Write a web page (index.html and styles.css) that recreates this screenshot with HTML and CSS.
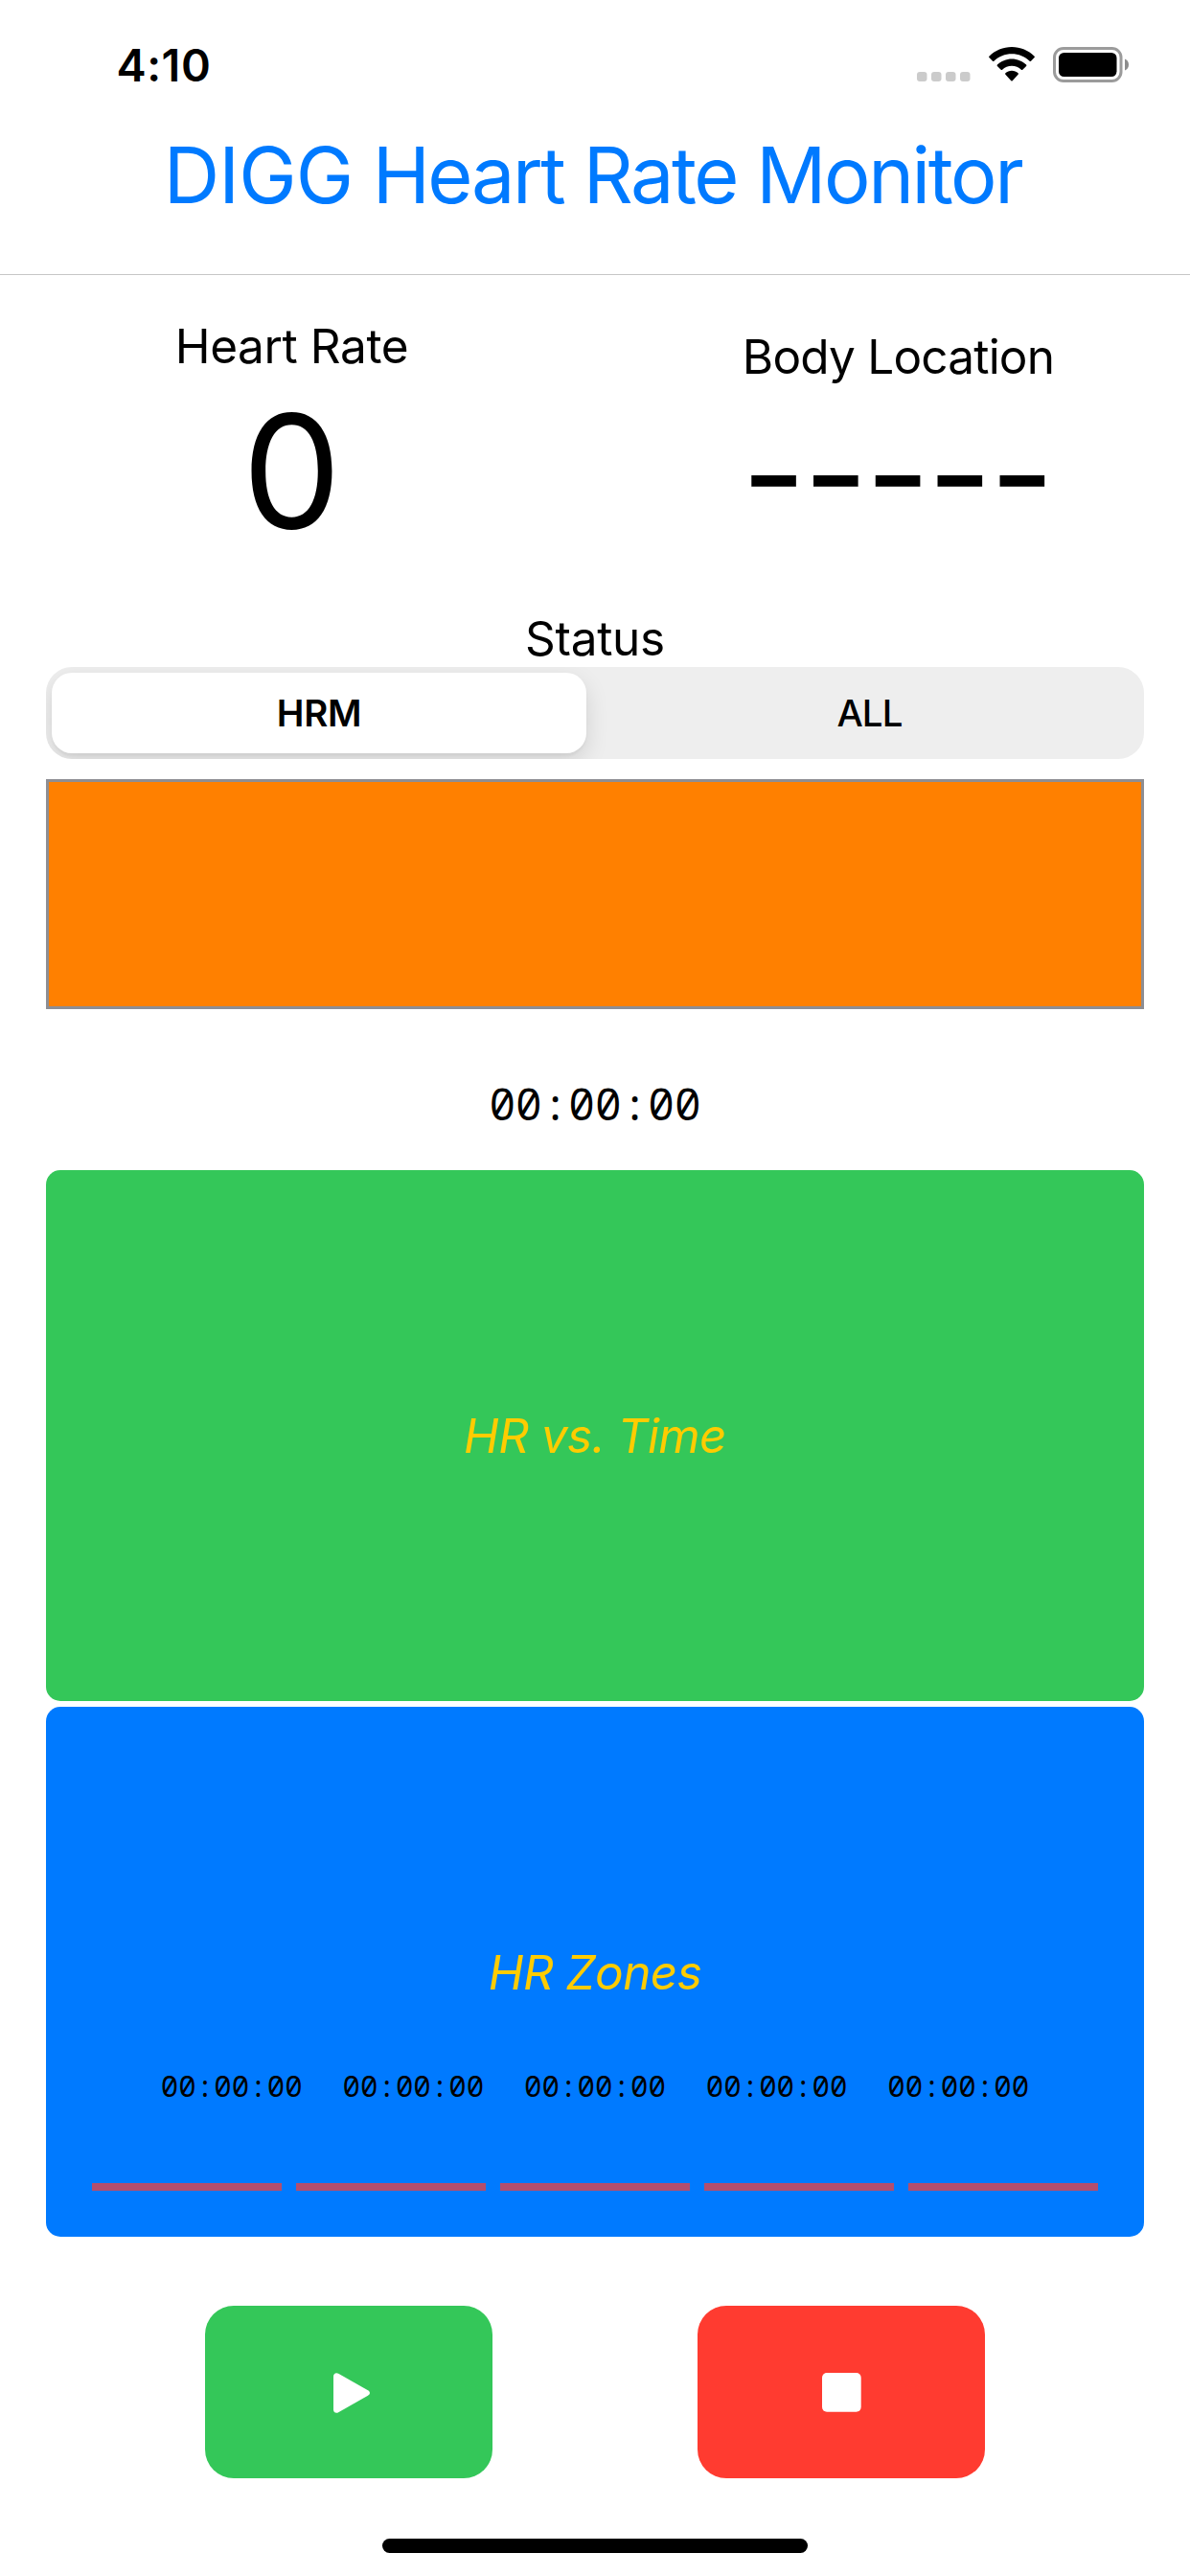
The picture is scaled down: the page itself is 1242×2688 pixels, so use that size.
FILE: index.html
```html
<!DOCTYPE html>
<html lang="en">
<head>
  <meta charset="utf-8">
  <title>DIGG Heart Rate Monitor</title>
  <link rel="stylesheet" href="styles.css">
</head>
<body>
  <header class="header">
    <div class="status-bar">
      <span class="clock">4:10</span>
      <div class="indicators">
        <svg class="signal" width="56" height="10" viewBox="0 0 56 10" fill="#cbcbcb">
          <rect x="0" width="10.5" height="10" rx="3"/>
          <rect x="15" width="10.5" height="10" rx="3"/>
          <rect x="30" width="10.5" height="10" rx="3"/>
          <rect x="45" width="10.5" height="10" rx="3"/>
        </svg>
        <svg class="wifi" width="48" height="36" viewBox="0 0 48 36">
          <path d="M24 0C15 0 6.500 3.600 .4 9.700Q-.2 10.400 .4 11.100L4 14.700Q4.700 15.300 5.400 14.700C10.300 9.900 17 7.300 24 7.300S37.700 9.900 42.600 14.700Q43.300 15.300 44 14.700L47.600 11.100Q48.200 10.400 47.600 9.700C41.500 3.600 33 0 24 0Z"/>
          <path d="M24 12.400C18.200 12.400 12.900 14.700 8.900 18.500Q8.200 19.200 8.900 19.900L12.700 23.700Q13.400 24.300 14.100 23.700C16.700 21.200 20.200 19.700 24 19.700S31.300 21.200 33.900 23.700Q34.600 24.300 35.300 23.700L39.100 19.900Q39.800 19.200 39.100 18.500C35.100 14.700 29.800 12.400 24 12.400Z"/>
          <path d="M24 24.700C21.400 24.700 19.100 25.700 17.400 27.300Q16.700 28 17.400 28.700L23.300 35.200Q24 35.900 24.700 35.200L30.600 28.700Q31.300 28 30.600 27.300C28.900 25.700 26.600 24.700 24 24.700Z"/>
        </svg>
        <svg class="battery" width="80" height="37" viewBox="0 0 80 37">
          <rect x="1.500" y="1.500" width="69.500" height="34" rx="9.500" fill="none" stroke="#9b9b9b" stroke-width="3"/>
          <rect x="6" y="6" width="60.500" height="25" rx="5.500"/>
          <path d="M75 12.500C77.500 13.500 79 15.800 79 18.500S77.500 23.500 75 24.500Z" fill="#8c8c8c"/>
        </svg>
      </div>
    </div>
    <h1 class="title"><span class="brand">DIGG</span> Heart Rate Monitor</h1>
  </header>

  <main class="content">
    <section class="metrics">
      <div class="metric">
        <div class="label label-rate">Heart Rate</div>
        <div class="rate">0</div>
      </div>
      <div class="metric metric-location">
        <div class="label label-location">Body Location</div>
        <div class="location">-----</div>
      </div>
    </section>

    <div class="label label-status">Status</div>
    <div class="segmented">
      <div class="segment segment-selected">HRM</div>
      <div class="segment">ALL</div>
    </div>
    <div class="device-list"></div>

    <div class="timer">00:00:00</div>

    <section class="card card-time">
      <h2 class="card-title">HR vs. Time</h2>
    </section>
    <section class="card card-zones">
      <h2 class="card-title">HR Zones</h2>
      <div class="zone-times">
        <span>00:00:00</span><span>00:00:00</span><span>00:00:00</span><span>00:00:00</span><span>00:00:00</span>
      </div>
      <div class="zone-bars">
        <i></i><i></i><i></i><i></i><i></i>
      </div>
    </section>
  </main>

  <div class="controls">
    <button class="control start" aria-label="Start">
      <svg width="38" height="42" viewBox="0 0 38 42"><path d="M0 3.500C0 .8 2.600-.7 5.200 .7L36 18.300Q38 19.500 38 21T36 23.700L5.200 41.300C2.600 42.700 0 41.200 0 38.500Z" fill="#fff"/></svg>
    </button>
    <button class="control stop" aria-label="Stop">
      <svg width="41" height="41" viewBox="0 0 41 41"><rect width="40.700" height="40.700" rx="5" fill="#fff"/></svg>
    </button>
  </div>
  <div class="home-indicator"></div>
</body>
</html>
```

FILE: styles.css
```css
* {
  box-sizing: border-box;
}

body {
  margin: 0;
  width: 1242px;
  height: 2688px;
  overflow: hidden;
  background: #fff;
  color: #000;
  font-family: Inter, "Liberation Sans", sans-serif;
}

h1,
h2 {
  margin: 0;
  font-weight: 400;
}

/* Header */
.header {
  height: 287px;
  border-bottom: 1px solid #c6c6c6;
}

.status-bar {
  display: flex;
  justify-content: space-between;
  height: 136px;
  padding: 0 63px 0 121.5px;
}

.clock {
  font-size: 46.8px;
  font-weight: 600;
  line-height: 136px;
  letter-spacing: 0.5px;
}

.indicators {
  display: flex;
  align-items: flex-start;
}

.signal {
  margin: 75px 19px 0 0;
}

.wifi {
  margin: 49px 19px 0 0;
}

.battery {
  margin-top: 49px;
}

.title {
  padding-right: 5px;
  color: #007aff;
  font-size: 81px;
  line-height: 95px;
  letter-spacing: -2.45px;
  text-align: center;
  white-space: nowrap;
}

.brand {
  letter-spacing: -0.9px;
}

/* Readings */
.content {
  padding: 0 48px;
}

.metrics {
  display: grid;
  grid-template-columns: 1fr 1fr;
  gap: 120px;
  height: 349px;
  padding-top: 44px;
  text-align: center;
}

.metric-location {
  padding-top: 11px;
}

.label {
  font-size: 49.5px;
  line-height: 60px;
  text-align: center;
}

.label-rate {
  letter-spacing: -0.4px;
}

.label-location {
  letter-spacing: -0.8px;
}

.label-status {
  letter-spacing: -0.3px;
}

.rate {
  font-size: 164px;
  line-height: 202px;
}

.location {
  padding-right: 3px;
  font-size: 146px;
  line-height: 184px;
  letter-spacing: -2.4px;
  font-feature-settings: "calt" 0;
}

/* Device filter */
.segmented {
  display: flex;
  gap: 9px;
  height: 96px;
  padding: 6px 0 6px 6px;
  overflow: hidden;
  border-radius: 27px;
  background: #eeeeee;
}

.segment {
  flex: 1;
  font-size: 38.5px;
  font-weight: 500;
  line-height: 84px;
  letter-spacing: -0.9px;
  text-align: center;
}

.segment-selected {
  flex: 0 0 558px;
  border-radius: 21px;
  background: #fff;
  box-shadow: 0 9px 24px rgba(0, 0, 0, 0.12), 0 3px 3px rgba(0, 0, 0, 0.04);
  font-weight: 600;
  letter-spacing: -0.2px;
}

.device-list {
  height: 240px;
  margin-top: 21px;
  border: 3px solid #8e8e93;
  background: #ff8000;
}

.timer,
.zone-times {
  font-family: "Noto Sans Mono", "Liberation Mono", monospace;
}

.timer {
  height: 168px;
  padding-top: 28px;
  font-size: 46.1px;
  line-height: 141px;
  text-align: center;
}

/* Charts */
.card {
  border-radius: 15px;
}

.card-title {
  color: #ffcc00;
  font-size: 49.5px;
  font-style: italic;
  line-height: 60px;
  letter-spacing: -0.6px;
  text-align: center;
}

.card-time {
  height: 554px;
  padding-top: 247px;
  background: #34c759;
}

.card-zones {
  height: 553px;
  margin-top: 6px;
  padding: 247px 48px 0;
  background: #007aff;
}

.zone-times {
  display: flex;
  justify-content: center;
  gap: 41.8px;
  margin-top: 68px;
  font-size: 30.8px;
  line-height: 41px;
}

.zone-bars {
  display: grid;
  grid-template-columns: repeat(5, 1fr);
  gap: 15px;
  margin-top: 81px;
}

.zone-bars i {
  height: 8px;
  background: #b34e6e;
}

/* Controls */
.controls {
  display: flex;
  justify-content: space-evenly;
  margin-top: 72px;
}

.control {
  display: flex;
  align-items: center;
  justify-content: center;
  width: 300px;
  height: 180px;
  padding: 0;
  border: 0;
  border-radius: 30px;
}

.start {
  padding: 2px 0 0 6px;
  background: #34c759;
}

.stop {
  background: #ff3b30;
}

.home-indicator {
  width: 444px;
  height: 15px;
  margin: 63px auto 0;
  border-radius: 7.5px;
  background: #000;
}
```
